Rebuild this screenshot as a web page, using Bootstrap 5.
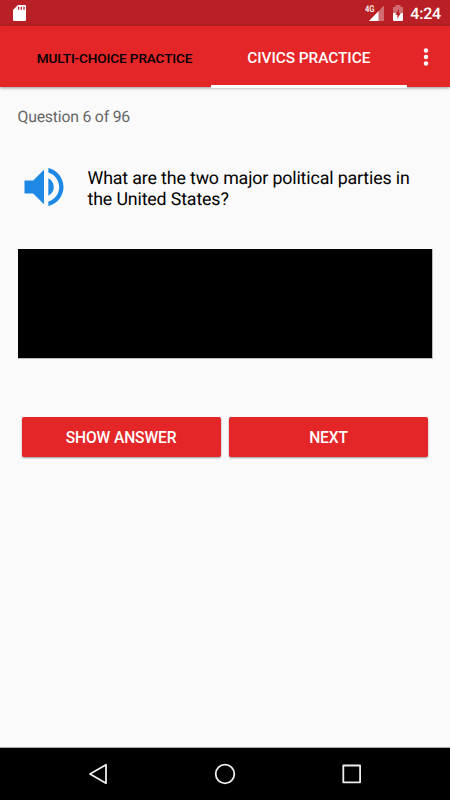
<!DOCTYPE html>
<html lang="en">
<head>
<meta charset="utf-8">
<meta name="viewport" content="width=device-width, initial-scale=1">
<title>Civics Practice</title>
<link href="https://cdn.jsdelivr.net/npm/bootstrap@5.3.0/dist/css/bootstrap.min.css" rel="stylesheet">
<style>
  body { font-family: Roboto, "Liberation Sans", sans-serif; background: #fafafa; color: #000; text-rendering: geometricPrecision; }
  .screen { width: 450px; height: 800px; }
  .status-bar { height: 26px; background: #b92025; padding: 0 9px 0 13px; }
  .battery { margin-left: 7px; }
  .clock { font-size: 16px; letter-spacing: -.2px; font-weight: 500; line-height: 26px; padding-top: 2px; margin-left: 6.5px; }
  .app-bar { height: 61px; background: #e42628; padding-left: 18px; box-shadow: 0 1px 3px rgba(0,0,0,.4); z-index: 1; }
  .tab-item { height: 61.5px; font-weight: 500; white-space: nowrap; border: 0; background: none; }
  .tab-multi { width: 193px; font-size: 13.6px; letter-spacing: -.13px; color: #000; padding: 3px 0 0; }
  .tab-civics { width: 195.5px; font-size: 15.4px; letter-spacing: -.05px; color: #fff; border-bottom: 3px solid #fff; padding: 7px 0 0; }
  .overflow-btn { width: 38px; padding: 0; }
  .page-body { margin: 0 17.5px; }
  .counter { font-size: 15.8px; letter-spacing: -.2px; line-height: 18px; color: #666; margin-top: 21px; }
  .question-row { margin-top: 41px; height: 42px; }
  .speaker { width: 52px; height: 52px; margin: -6px 18px 0 0; }
  .question { font-size: 17.8px; letter-spacing: -.14px; line-height: 20.5px; padding-top: 2px; white-space: nowrap; }
  .answer-box { height: 110px; background: #000; border: solid #bbb; border-width: 0 1px 1px 0; margin-top: 40px; }
  .actions { margin: 58.4px 4.4px 0 4px; gap: 8.4px; }
  .btn-action { height: 40px; background: #e42628; color: #fff; font-size: 15.6px; letter-spacing: -.12px; font-weight: 500; border: 0; border-radius: 2px; padding: 3px 0 0; box-shadow: 0 1px 2px rgba(0,0,0,.4); }
  .nav-keys { height: 53px; background: #000; border-top: 1px solid #aaa; }
</style>
</head>
<body>
<div class="screen d-flex flex-column overflow-hidden">
  <div class="status-bar d-flex align-items-center text-white flex-shrink-0">
    <svg width="14" height="18" viewBox="0 0 14 18"><path fill="#fff" d="M5 1h7q1 0 1 1v14q0 1-1 1H1q-1 0-1-1V6z"/><path stroke="#b92025" stroke-width="1.3" d="M5.6 2.8v3M8.3 2.8v3M11 2.8v3"/></svg>
    <svg class="ms-auto" width="20" height="20" viewBox="0 0 20 20"><path fill="#fff" fill-opacity=".35" d="M19 2.5V18H4z"/><path fill="#fff" d="M13.5 8.2V18H4z"/><text x="0" y="9.3" font-size="9.3" font-weight="500" fill="#fff" textLength="9.5" lengthAdjust="spacingAndGlyphs">4G</text></svg>
    <svg class="battery" width="12" height="18" viewBox="0 0 12 18"><path fill="#fff" fill-opacity=".35" d="M1 3h2.5V1h5v2H11v6H1z"/><path fill="#fff" d="M1 9h10v7q0 1-1 1H2q-1 0-1-1z"/><path fill="#b92025" d="M7 5L3.2 10.7h2.2v4L8.8 9H7z"/></svg>
    <span class="clock">4:24</span>
  </div>
  <header class="app-bar d-flex position-relative flex-shrink-0">
    <button class="tab-item tab-multi">MULTI-CHOICE PRACTICE</button>
    <button class="tab-item tab-civics">CIVICS PRACTICE</button>
    <button class="btn overflow-btn border-0 d-flex align-items-center justify-content-center" aria-label="More options">
      <svg width="6" height="20" viewBox="0 0 6 20" fill="#fff"><circle cx="3" cy="3.5" r="2.2"/><circle cx="3" cy="10" r="2.2"/><circle cx="3" cy="16.5" r="2.2"/></svg>
    </button>
  </header>
  <main class="page-body flex-grow-1">
    <div class="counter">Question 6 of 96</div>
    <div class="question-row d-flex">
      <svg class="speaker flex-shrink-0" viewBox="0 0 24 24" fill="#1e88e5"><path d="M3 9v6h4l5 5V4L7 9H3zm13.5 3c0-1.77-1.02-3.29-2.5-4.03v8.05c1.48-.73 2.5-2.25 2.5-4.02zM14 3.23v2.06c2.89.86 5 3.54 5 6.71s-2.11 5.85-5 6.71v2.06c4.01-.91 7-4.49 7-8.77s-2.99-7.86-7-8.77z"/></svg>
      <div class="question">What are the two major political parties in<br>the United States?</div>
    </div>
    <div class="answer-box"></div>
    <div class="actions d-flex">
      <button class="btn-action flex-fill w-50">SHOW ANSWER</button>
      <button class="btn-action flex-fill w-50">NEXT</button>
    </div>
  </main>
  <nav class="nav-keys d-flex flex-shrink-0 justify-content-center align-items-center" aria-label="System navigation">
    <svg width="280" height="24" viewBox="0 0 280 24" fill="none" stroke="#eee" stroke-width="1.8" stroke-linejoin="round"><path d="M5 12L21 2.8v18.4z"/><circle cx="140" cy="12" r="9.3"/><rect x="258.3" y="3.5" width="16.8" height="16.8"/></svg>
  </nav>
</div>
<script src="https://cdn.jsdelivr.net/npm/bootstrap@5.3.0/dist/js/bootstrap.bundle.min.js"></script>
</body>
</html>
